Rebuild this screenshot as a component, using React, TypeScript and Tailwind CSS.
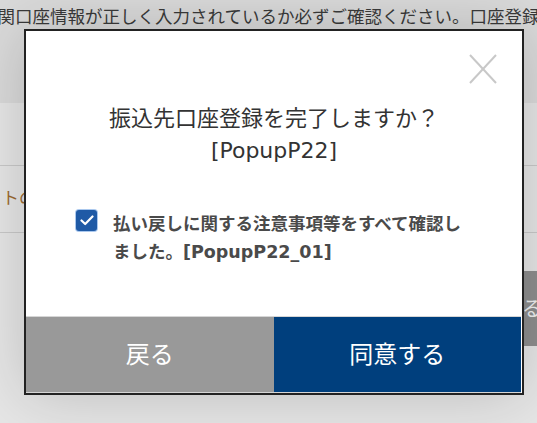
import React from 'react';

const font = { fontFamily: '"DejaVu Sans", "Noto Sans CJK JP", sans-serif' };

const CloseIcon = () => (
  <svg width="28" height="30" viewBox="0 0 28 30" fill="none">
    <line x1="1" y1="1" x2="27" y2="29" stroke="#c8c8c8" strokeWidth="2" />
    <line x1="27" y1="1" x2="1" y2="29" stroke="#c8c8c8" strokeWidth="2" />
  </svg>
);

const App = () => {
  return (
    <div
      className="relative w-[537px] h-[423px] overflow-hidden bg-[#e6e6e6]"
      style={font}
    >
      {/* page behind the popup */}
      <div className="flex flex-col h-full">
        <div className="h-[103px] bg-[#dadada] pt-[4px] overflow-hidden">
          <div className="ml-[-20px] whitespace-nowrap text-[17.5px] leading-[26px] text-[#3a3a3a]">
            機関口座情報が正しく入力されているか必ずご確認ください。口座登録後
          </div>
        </div>
        <div className="h-[63px] border-b border-[#c9c9c9]" />
        <div className="h-[67px] border-b border-[#c9c9c9] flex items-center overflow-hidden">
          <span className="ml-[2px] text-[17px] text-[#9c6a30]">トの</span>
        </div>
        <div className="flex justify-end pt-[38px]">
          <div className="w-[15px] h-[75px] bg-[#8e8e8e] flex items-center text-[20px] text-[#f0f0f0] overflow-hidden">
            る
          </div>
        </div>
      </div>

      {/* popup */}
      <div className="absolute left-[24px] top-[29px] w-[500px] h-[366px] border-2 border-[#222] bg-white flex flex-col shadow-[0_0_60px_rgba(0,0,0,0.18)]">
        <button className="absolute right-[25px] top-[23px]">
          <CloseIcon />
        </button>

        <div className="pt-[72px] text-center text-[22px] leading-[32px] text-[#333]">
          <div>振込先口座登録を完了しますか？</div>
          <div>[PopupP22]</div>
        </div>

        <label className="flex items-start mt-[43px] pl-[49px]">
          <span className="mt-[-1px] w-[23px] h-[23px] shrink-0 rounded-[4px] bg-[#aac8ee] p-[1px]">
            <span className="flex w-full h-full items-center justify-center rounded-[3px] bg-[#1f5aa6]">
              <svg width="14" height="11" viewBox="0 0 14 11" fill="none">
                <path
                  d="M1.5 5.5 L5.2 9 L12.5 1.5"
                  stroke="white"
                  strokeWidth="2.2"
                  strokeLinecap="round"
                  strokeLinejoin="round"
                />
              </svg>
            </span>
          </span>
          <span className="ml-[15px] w-[360px] text-[17.5px] leading-[28px] font-bold text-[#4a4a4a]">
            払い戻しに関する注意事項等をすべて確認しました。[PopupP22_01]
          </span>
        </label>

        <div className="mt-auto flex h-[77px] border-t border-b border-[#d6d6d6] mr-px">
          <button className="flex-1 bg-[#999999] text-white text-[24px]">
            戻る
          </button>
          <button className="flex-1 bg-[#003f7d] text-white text-[24px]">
            同意する
          </button>
        </div>
      </div>
    </div>
  );
};

export default App;
